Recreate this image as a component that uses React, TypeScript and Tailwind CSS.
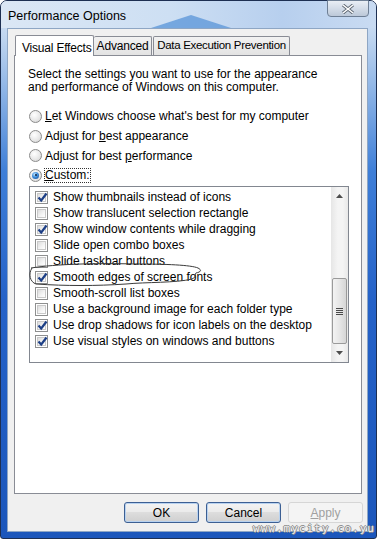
import React from 'react';

const ui = { fontFamily: '"Liberation Sans", Arial, sans-serif' };

const items = [
  { label: 'Show thumbnails instead of icons', on: true },
  { label: 'Show translucent selection rectangle', on: false },
  { label: 'Show window contents while dragging', on: true },
  { label: 'Slide open combo boxes', on: false },
  { label: 'Slide taskbar buttons', on: false },
  { label: 'Smooth edges of screen fonts', on: true },
  { label: 'Smooth-scroll list boxes', on: false },
  { label: 'Use a background image for each folder type', on: false },
  { label: 'Use drop shadows for icon labels on the desktop', on: true },
  { label: 'Use visual styles on windows and buttons', on: true },
];

const Radio = ({ on }: { on?: boolean }) => (
  <span className="w-[13px] h-[13px] rounded-full border border-[#8b8b8b] bg-[radial-gradient(circle_at_40%_35%,#ffffff_0%,#e8e8e8_55%,#cfcfcf_100%)] flex items-center justify-center shrink-0">
    {on && (
      <span className="w-[7px] h-[7px] rounded-full bg-[radial-gradient(circle_at_40%_35%,#bfe4ff_0%,#3f8fdc_45%,#0d3f8a_100%)] flex items-center justify-center">
        <span className="w-[2px] h-[2px] rounded-full bg-[#0a1f40]" />
      </span>
    )}
  </span>
);

const Check = ({ on }: { on: boolean }) => (
  <span className="w-[13px] h-[13px] border border-[#8e8f8f] bg-white p-[1px] shrink-0 relative">
    <span className="block w-full h-full bg-[linear-gradient(135deg,#dcdcdc_0%,#f4f4f4_60%,#ffffff_100%)] border border-[#c9c9c9]" />
    {on && (
      <svg className="absolute left-[1px] top-[0px]" width="11" height="11" viewBox="0 0 11 11">
        <path d="M1.5 5.5 L4.2 8.5 L9.5 1.5" fill="none" stroke="#1d3f86" strokeWidth="2.2" />
      </svg>
    )}
  </span>
);

const Btn = ({ label, disabled }: { label: React.ReactNode; disabled?: boolean }) => (
  <div
    className={
      'w-[75px] h-[21px] rounded-[3px] flex items-center justify-center text-[12px] ' +
      (disabled
        ? 'border border-[#d6d6d6] bg-[#f4f4f4] text-[#a0a0a0]'
        : 'border border-[#3c5f93] bg-[linear-gradient(#f3f3f3_0%,#ebebeb_45%,#dddddd_50%,#cfcfcf_100%)] text-black shadow-[inset_0_0_0_1px_#b8d2f0]')
    }
  >
    {label}
  </div>
);

export default function App() {
  return (
    <div className="w-[377px] h-[539px] bg-white relative overflow-hidden" style={ui}>
      <div className="w-[377px] h-[539px] rounded-t-[7px] rounded-b-[3px] border border-[#1d2f52] bg-[linear-gradient(180deg,#dce8f6_0px,#bcd3ef_40px,#8db4e6_90px,#3f7fd8_170px,#2562c8_300px,#1b56bb_539px)] flex flex-col">
        {/* title bar */}
        <div className="h-[27px] relative flex bg-[linear-gradient(90deg,#dbe7f5_0%,#cddff3_45%,#b7cfee_75%,#c9dbf2_100%)] rounded-t-[6px]">
          <svg className="absolute left-[150px] top-[12px]" width="80" height="15" viewBox="0 0 80 15">
            <path d="M0 15 L40 2 L80 15 Z" fill="#5f98da" opacity="0.8" />
          </svg>
          <span className="relative pl-[7px] pt-[6px] text-[12.5px] text-black whitespace-nowrap">Performance Options</span>
          <div className="absolute right-[7px] top-[-1px] w-[42px] h-[17px] rounded-b-[4px] border border-[#6e7f95] bg-[linear-gradient(#e9eef5_0%,#d3dce8_50%,#bcc8d8_100%)] flex items-center justify-center">
            <svg width="14" height="10" viewBox="0 0 14 10">
              <path d="M2 1 L12 9 M12 1 L2 9" stroke="#5a6470" strokeWidth="3.2" />
              <path d="M2 1 L12 9 M12 1 L2 9" stroke="#ffffff" strokeWidth="1.6" />
            </svg>
          </div>
        </div>

        {/* client area */}
        <div className="flex-1 ml-[6px] mr-[8px] mb-[6px] border border-[#8ea6c4] bg-[#f0f0f0] flex flex-col pl-[6px] pr-[4px] pt-[6px] text-[12px] text-black">
          {/* tabs */}
          <div className="flex items-end h-[20px] pl-[1px] whitespace-nowrap">
            <div className="h-[21px] w-[79px] -mb-[1px] border border-b-0 border-[#898c95] bg-white rounded-t-[2px] pl-[6px] pt-[3px] relative z-10 tracking-[-0.2px]">
              Visual Effects
            </div>
            <div className="h-[19px] w-[58px] border border-l-0 border-b-0 border-[#898c95] bg-[linear-gradient(#f2f2f2,#e3e3e3)] rounded-t-[2px] flex items-center justify-center tracking-[-0.2px]">
              Advanced
            </div>
            <div className="h-[19px] w-[137px] ml-[1px] border border-b-0 border-[#898c95] bg-[linear-gradient(#f2f2f2,#e3e3e3)] rounded-t-[2px] flex items-center justify-center text-[11.5px] tracking-[-0.3px]">
              Data Execution Prevention
            </div>
          </div>

          {/* panel */}
          <div className="w-[348px] h-[439px] border border-[#898c95] bg-white pl-[13px] pt-[12px] flex flex-col">
            <p className="leading-[13px] w-[300px]">
              Select the settings you want to use for the appearance and performance of Windows on this computer.
            </p>

            <div className="mt-[12px] flex flex-col">
              <div className="h-[20px] flex items-center gap-[3px] pl-[1px]">
                <Radio />
                <span><u>L</u>et Windows choose what's best for my computer</span>
              </div>
              <div className="h-[20px] flex items-center gap-[3px] pl-[1px]">
                <Radio />
                <span>Adjust for <u>b</u>est appearance</span>
              </div>
              <div className="h-[19px] flex items-center gap-[3px] pl-[1px]">
                <Radio />
                <span>Adjust for best <u>p</u>erformance</span>
              </div>
              <div className="h-[20px] flex items-center gap-[3px] pl-[1px]">
                <Radio on />
                <span className="outline outline-1 outline-dotted outline-[#333] leading-[13px]"><u>C</u>ustom:</span>
              </div>
            </div>

            {/* list */}
            <div className="mt-[1px] ml-[1px] w-[320px] h-[177px] border border-[#828790] bg-white flex relative">
              <div className="flex-1 pt-[2px] pl-[5px] flex flex-col">
                {items.map((it) => (
                  <div key={it.label} className="h-[16px] flex items-center gap-[5px]">
                    <Check on={it.on} />
                    <span>{it.label}</span>
                  </div>
                ))}
              </div>
              {/* scrollbar */}
              <div className="w-[17px] h-full bg-[linear-gradient(90deg,#e6e6e6,#f4f4f4_40%,#f4f4f4_70%,#e8e8e8)] flex flex-col items-center">
                <div className="h-[17px] flex items-center justify-center">
                  <svg width="7" height="4" viewBox="0 0 7 4"><path d="M0 4 L3.5 0 L7 4 Z" fill="#4d4d4d" /></svg>
                </div>
                <div className="flex-1 w-full" />
                <div className="w-[15px] h-[66px] rounded-[2px] border border-[#9a9a9a] bg-[linear-gradient(90deg,#f3f3f3,#e6e6e6_50%,#d6d6d6)] flex flex-col items-center justify-center gap-[1px]">
                  <span className="w-[7px] h-[1px] bg-[#4a4a4a]" />
                  <span className="w-[7px] h-[1px] bg-[#4a4a4a]" />
                  <span className="w-[7px] h-[1px] bg-[#4a4a4a]" />
                  <span className="w-[7px] h-[1px] bg-[#4a4a4a]" />
                </div>
                <div className="h-[18px] flex items-center justify-center">
                  <svg width="7" height="4" viewBox="0 0 7 4"><path d="M0 0 L3.5 4 L7 0 Z" fill="#4d4d4d" /></svg>
                </div>
              </div>
              {/* hand drawn mark */}
              <svg className="absolute left-[-4px] top-[75px] pointer-events-none" width="180" height="26" viewBox="0 0 180 26">
                <path
                  d="M5 6 C 30 2, 70 1, 110 2 C 140 2, 165 3, 172 6 C 176 8, 175 10, 170 11 C 168 12, 172 14, 166 17 C 150 21, 120 20, 100 22 C 70 24, 40 24, 10 22 C 4 20, 2 12, 6 6"
                  fill="none"
                  stroke="#3a3a3a"
                  strokeWidth="1"
                />
              </svg>
            </div>
          </div>

          {/* buttons */}
          <div className="mt-[8px] flex justify-end gap-[7px]">
            <Btn label="OK" />
            <Btn label="Cancel" />
            <Btn label={<span><u>A</u>pply</span>} disabled />
          </div>
        </div>
      </div>
      <span className="absolute right-[2px] bottom-[5px] text-[11px] leading-[11px] tracking-[1px] text-[#f2f2f2] [text-shadow:1px_0_#8a8a8a,-1px_0_#8a8a8a,0_1px_#8a8a8a,0_-1px_#8a8a8a]" style={{ fontFamily: '"DejaVu Sans Mono", monospace' }}>
        www.mycity.co.yu
      </span>
    </div>
  );
}
